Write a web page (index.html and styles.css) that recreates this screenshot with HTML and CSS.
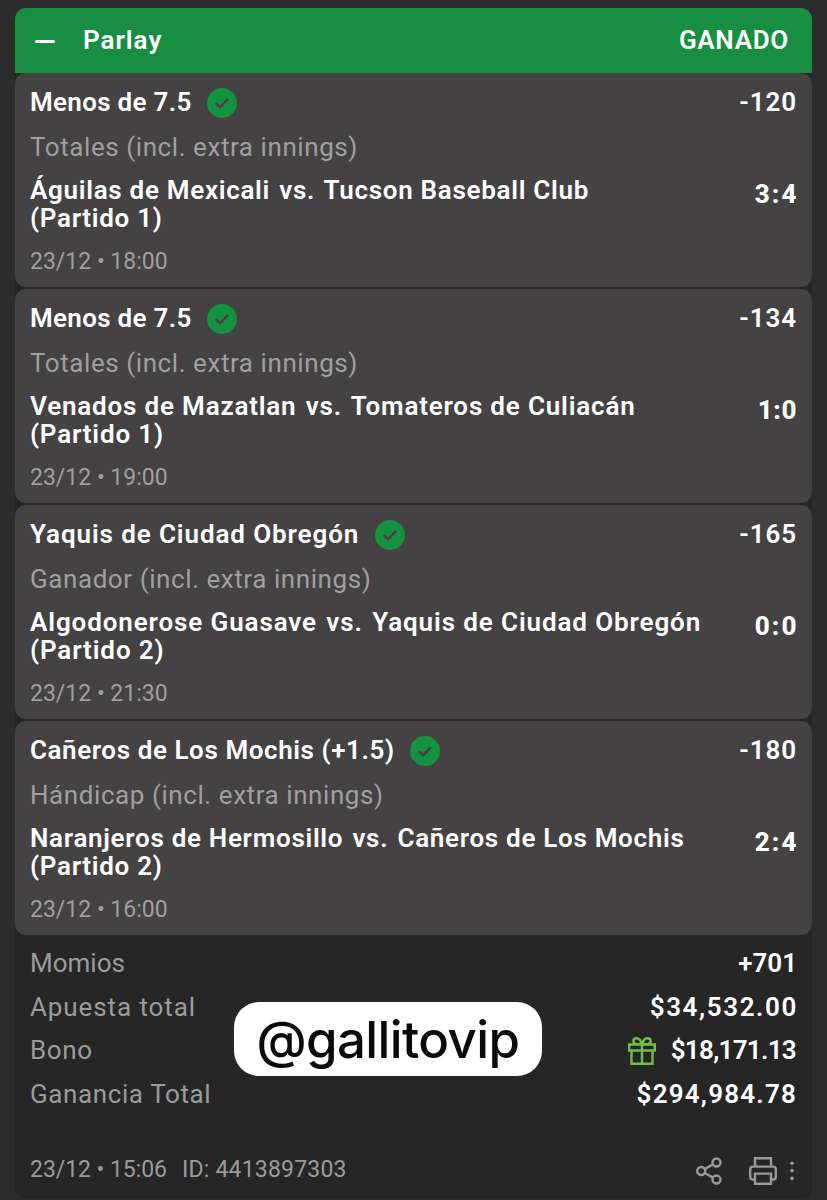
FILE: index.html
```html
<!DOCTYPE html>
<html lang="es">
<head>
    <meta charset="UTF-8">
    <meta name="viewport" content="width=device-width, initial-scale=1.0">
    <title>Parlay</title>
    <link rel="stylesheet" href="styles.css">
</head>
<body>

    <svg class="defs">
        <symbol id="check" viewBox="0 0 30 30">
            <circle cx="15" cy="15" r="15" fill="#15923f"/>
            <path d="M8.6 15l4.5 4.200 8-8.400" fill="none" stroke="#444243" stroke-width="2.500"/>
        </symbol>
    </svg>

    <div class="ticket">
        <div class="header">
            <span class="minus"></span>
            <span class="type">Parlay</span>
            <span class="status">GANADO</span>
        </div>

        <div class="card">
            <div class="pick">
                <span class="name tight">Menos de 7.5</span>
                <svg class="check"><use href="#check"/></svg>
                <span class="odds">-120</span>
            </div>
            <div class="market">Totales (incl. extra innings)</div>
            <div class="match">
                <div class="teams">Águilas de Mexicali <span class="vs">vs.</span> Tucson Baseball Club<br>(Partido 1)</div>
                <div class="score">3:4</div>
            </div>
            <div class="date">23/12 • 18:00</div>
        </div>

        <div class="card">
            <div class="pick">
                <span class="name tight">Menos de 7.5</span>
                <svg class="check"><use href="#check"/></svg>
                <span class="odds">-134</span>
            </div>
            <div class="market">Totales (incl. extra innings)</div>
            <div class="match">
                <div class="teams wide">Venados de Mazatlan <span class="vs">vs.</span> Tomateros de Culiacán<br>(Partido 1)</div>
                <div class="score narrow">1:0</div>
            </div>
            <div class="date">23/12 • 19:00</div>
        </div>

        <div class="card">
            <div class="pick">
                <span class="name loose">Yaquis de Ciudad Obregón</span>
                <svg class="check"><use href="#check"/></svg>
                <span class="odds">-165</span>
            </div>
            <div class="market">Ganador (incl. extra innings)</div>
            <div class="match">
                <div class="teams widest">Algodonerose Guasave <span class="vs">vs.</span> Yaquis de Ciudad Obregón<br>(Partido 2)</div>
                <div class="score">0:0</div>
            </div>
            <div class="date">23/12 • 21:30</div>
        </div>

        <div class="card">
            <div class="pick">
                <span class="name">Cañeros de Los Mochis (+1.5)</span>
                <svg class="check"><use href="#check"/></svg>
                <span class="odds">-180</span>
            </div>
            <div class="market">Hándicap (incl. extra innings)</div>
            <div class="match">
                <div class="teams">Naranjeros de Hermosillo <span class="vs">vs.</span> Cañeros de Los Mochis<br>(Partido 2)</div>
                <div class="score">2:4</div>
            </div>
            <div class="date">23/12 • 16:00</div>
        </div>

        <div class="summary">
            <div class="row"><span class="short">Momios</span><span class="value odds-total">+701</span></div>
            <div class="row"><span class="loose">Apuesta total</span><span class="value stake">$34,532.00</span></div>
            <div class="row">
                <span>Bono</span>
                <span class="value bonus">
                    <svg class="gift" viewBox="0 0 28 28">
                        <path d="M1.200 7.500h25.600v6H1.200zM3.500 13.500v13.200h21V13.500M14 7.500v19.200M13.500 7.200H9.200C4.500 7.200 4 1.200 8.300 1.200c3 0 4.800 3 5.200 6zM14.500 7.200h4.300c4.700 0 5.200-6 .9-6-3 0-4.800 3-5.200 6z"/>
                    </svg>
                    $18,171.13
                </span>
            </div>
            <div class="row"><span>Ganancia Total</span><span class="value payout">$294,984.78</span></div>
            <div class="badge">@gallitovip</div>
        </div>

        <div class="footer">
            <span>23/12 • 15:06</span>
            <span class="id">ID: 4413897303</span>
            <svg class="share" viewBox="0 0 26 28">
                <circle cx="20.500" cy="5.500" r="4"/>
                <circle cx="5.200" cy="14" r="4"/>
                <circle cx="20.500" cy="22.500" r="4"/>
                <path d="M8.700 12l8.300-4.600M8.700 16l8.300 4.600"/>
            </svg>
            <svg class="print" viewBox="0 0 28 28">
                <path d="M6 9V1.300h16V9M6 22.500H3.800c-1.600 0-2.600-1-2.600-2.600V12.300C1.200 10.600 2.200 9.600 3.800 9.600h20.400c1.600 0 2.600 1 2.600 2.700v7.600c0 1.600-1 2.600-2.600 2.600H22M6 16.600h16v10.100H6z"/>
            </svg>
            <svg class="dots" viewBox="0 0 4 20">
                <circle cx="2" cy="2.200" r="1.800"/>
                <circle cx="2" cy="9.800" r="1.800"/>
                <circle cx="2" cy="17.400" r="1.800"/>
            </svg>
        </div>
    </div>

</body>
</html>
```

FILE: styles.css
```css
* {
    box-sizing: border-box;
}

body {
    margin: 0;
    padding: 8px 15px 0;
    height: 1200px;
    overflow: hidden;
    background: #2c2c2c;
    font-family: Roboto, "Noto Sans", sans-serif;
    font-size: 26px;
    color: #fff;
}

.defs {
    display: none;
}

.ticket {
    width: 797px;
    background: #262626;
    border-radius: 11px;
    overflow: hidden;
}

.header {
    display: flex;
    align-items: center;
    height: 65px;
    padding: 0 23px 2px 20px;
    background: #188e43;
    font-weight: 600;
}

.minus {
    width: 20px;
    height: 3px;
    margin-top: 4px;
    background: #fff;
    border-radius: 2px;
}

.type {
    margin-left: 28px;
    letter-spacing: 1px;
}

.status {
    margin-left: auto;
    letter-spacing: 0.7px;
}

.card {
    height: 214px;
    margin-bottom: 2px;
    padding: 13px 15px 12px;
    background: #444243;
    border-radius: 11px;
}

.pick {
    display: flex;
    align-items: center;
    height: 32px;
    font-weight: 600;
}

.name {
    letter-spacing: 0.58px;
}

.tight {
    letter-spacing: 0.3px;
}

.loose {
    letter-spacing: 0.9px;
}

.check {
    width: 30px;
    height: 30px;
    margin: 2px 0 0 15.5px;
}

.odds {
    margin-left: auto;
    letter-spacing: 0.9px;
}

.market {
    margin-top: 14px;
    line-height: 30px;
    color: #a09fa0;
    letter-spacing: 0.57px;
}

.match {
    display: flex;
    justify-content: space-between;
    margin-top: 14px;
}

.teams {
    line-height: 28px;
    font-weight: 600;
    letter-spacing: 0.7px;
}

.wide {
    letter-spacing: 0.82px;
}

.widest {
    letter-spacing: 0.89px;
}

.vs {
    margin: 0 2px;
}

.score {
    line-height: 36px;
    font-weight: 800;
    letter-spacing: 2.1px;
    margin-right: -1.5px;
}

.narrow {
    letter-spacing: 0.6px;
    margin-right: 0;
}

.date {
    margin-top: 16px;
    line-height: 28px;
    font-size: 23px;
    color: #a09fa0;
    letter-spacing: 0;
}

.summary {
    position: relative;
    margin-top: -2px;
    padding: 6px 15px 0;
}

.row {
    display: flex;
    justify-content: space-between;
    align-items: center;
    height: 43.75px;
    color: #9b9b9b;
    letter-spacing: 0.6px;
}

.short {
    letter-spacing: 0;
}

.value {
    display: flex;
    align-items: center;
    color: #fff;
    font-weight: 600;
}

.odds-total {
    letter-spacing: 0;
}

.stake {
    letter-spacing: 1.6px;
    margin-right: -1px;
}

.bonus {
    letter-spacing: -0.7px;
    margin-right: 1px;
}

.payout {
    letter-spacing: 1.2px;
}

.gift {
    width: 28px;
    height: 28px;
    margin: 1px 15px 0 0;
    fill: none;
    stroke: #6cc04a;
    stroke-width: 2.4;
}

.badge {
    position: absolute;
    left: 219px;
    top: 67px;
    width: 308px;
    height: 74px;
    line-height: 76px;
    border-radius: 25px;
    background: #fff;
    color: #0a0a0a;
    font-family: Inter, sans-serif;
    font-size: 51px;
    font-weight: 500;
    text-align: center;
    letter-spacing: -0.6px;
}

.footer {
    display: flex;
    align-items: center;
    height: 60px;
    margin-top: 23px;
    padding: 0 18px 0 15px;
    font-size: 23px;
    color: #9b9b9b;
    letter-spacing: -0.05px;
}

.id {
    margin-left: 15px;
    letter-spacing: 0.2px;
}

.share {
    width: 26px;
    height: 28px;
    margin: 3px 0 0 auto;
    fill: none;
    stroke: #989898;
    stroke-width: 2.4;
}

.print {
    width: 28px;
    height: 28px;
    margin: 3px 0 0 27px;
    fill: none;
    stroke: #989898;
    stroke-width: 2.4;
}

.dots {
    width: 4px;
    height: 20px;
    margin: 3px 0 0 13px;
    fill: #989898;
}
```
